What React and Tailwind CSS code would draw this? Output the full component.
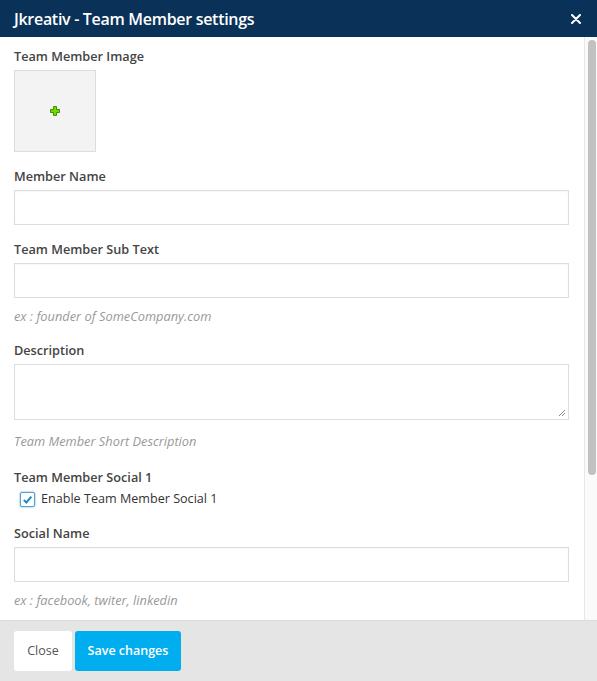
const font = { fontFamily: '"Open Sans", "Noto Sans", sans-serif' };

function Label({ children, className = "mt-[15px]" }) {
  return (
    <div className={`text-[12.7px] leading-[18px] font-semibold text-[#444] ${className}`}>
      {children}
    </div>
  );
}

function Hint({ children, className = "mt-[10px]" }) {
  return (
    <div className={`text-[12.8px] leading-[17px] italic text-[#999] ${className}`}>
      {children}
    </div>
  );
}

function TextInput() {
  return (
    <div className="mt-[5px] h-[35px] w-[555px] border border-[#dddddd] bg-white shadow-[inset_0_1px_2px_rgba(0,0,0,0.04)]" />
  );
}

export default function App() {
  return (
    <div style={font} className="flex h-[681px] w-[597px] flex-col overflow-hidden bg-white">
      <div className="flex h-[37px] shrink-0 items-center justify-between bg-[#0a3258] pl-[14px] pr-[16px]">
        <h1 className="text-[16px] font-semibold tracking-[-0.3px] text-white">
          Jkreativ - Team Member settings
        </h1>
        <svg className="h-[10px] w-[10px]" viewBox="0 0 10 10">
          <path d="M1 1L9 9M9 1L1 9" stroke="white" strokeWidth="2" strokeLinecap="round" />
        </svg>
      </div>

      <div className="flex min-h-0 flex-1">
        <div className="min-w-0 flex-1 overflow-hidden pl-[14px] pt-[10px]">
          <Label className="">Team Member Image</Label>
          <div className="mt-[5px] flex h-[82px] w-[82px] items-center justify-center border border-[#dddddd] bg-[#f3f3f3]">
            <svg className="h-[10px] w-[10px]" viewBox="0 0 10 10">
              <path
                d="M3.5 0.5h3v3h3v3h-3v3h-3v-3h-3v-3h3z"
                fill="#7fd400"
                stroke="#2f9a00"
                strokeWidth="1"
              />
            </svg>
          </div>

          <Label>Member Name</Label>
          <TextInput />

          <Label>Team Member Sub Text</Label>
          <TextInput />
          <Hint>ex : founder of SomeCompany.com</Hint>

          <Label className="mt-[16px]">Description</Label>
          <div className="relative mt-[5px] h-[56px] w-[555px] border border-[#dddddd] bg-white">
            <svg className="absolute bottom-[2px] right-[2px] h-[8px] w-[8px]" viewBox="0 0 8 8">
              <path d="M7 1L1 7M7 4L4 7" stroke="#888" strokeWidth="1" />
            </svg>
          </div>
          <Hint className="mt-[13px]">Team Member Short Description</Hint>

          <Label className="mt-[18px]">Team Member Social 1</Label>
          <div className="mt-[4px] flex items-center pl-[6px]">
            <span className="flex h-[15px] w-[15px] items-center justify-center rounded-[2px] border border-[#5b9dd9] bg-white shadow-[0_0_2px_rgba(30,140,190,0.8)]">
              <svg className="h-[11px] w-[11px]" viewBox="0 0 12 12">
                <path d="M2 6.5L4.8 9.2L10.2 2.8" fill="none" stroke="#1e8cbe" strokeWidth="2.2" />
              </svg>
            </span>
            <span className="ml-[6px] text-[12.6px] leading-[18px] text-[#333]">
              Enable Team Member Social 1
            </span>
          </div>

          <Label className="mt-[16px]">Social Name</Label>
          <TextInput />
          <Hint>ex : facebook, twiter, linkedin</Hint>
        </div>

        <div className="relative w-[13px] shrink-0 border-l border-[#e8e8e8] bg-[#fafafa]">
          <div className="absolute left-[3px] top-[3px] h-[435px] w-[8px] rounded-full bg-[#c1c1c1]" />
        </div>
      </div>

      <div className="flex h-[61px] shrink-0 items-center gap-[3px] border-t border-[#dcdcdc] bg-[#e5e5e5] pl-[14px]">
        <button className="h-[40px] w-[58px] rounded-[3px] bg-white text-[12.5px] text-[#555]">
          Close
        </button>
        <button className="h-[40px] w-[106px] rounded-[3px] bg-[#00aeef] text-[12.5px] font-semibold text-white">
          Save changes
        </button>
      </div>
    </div>
  );
}
